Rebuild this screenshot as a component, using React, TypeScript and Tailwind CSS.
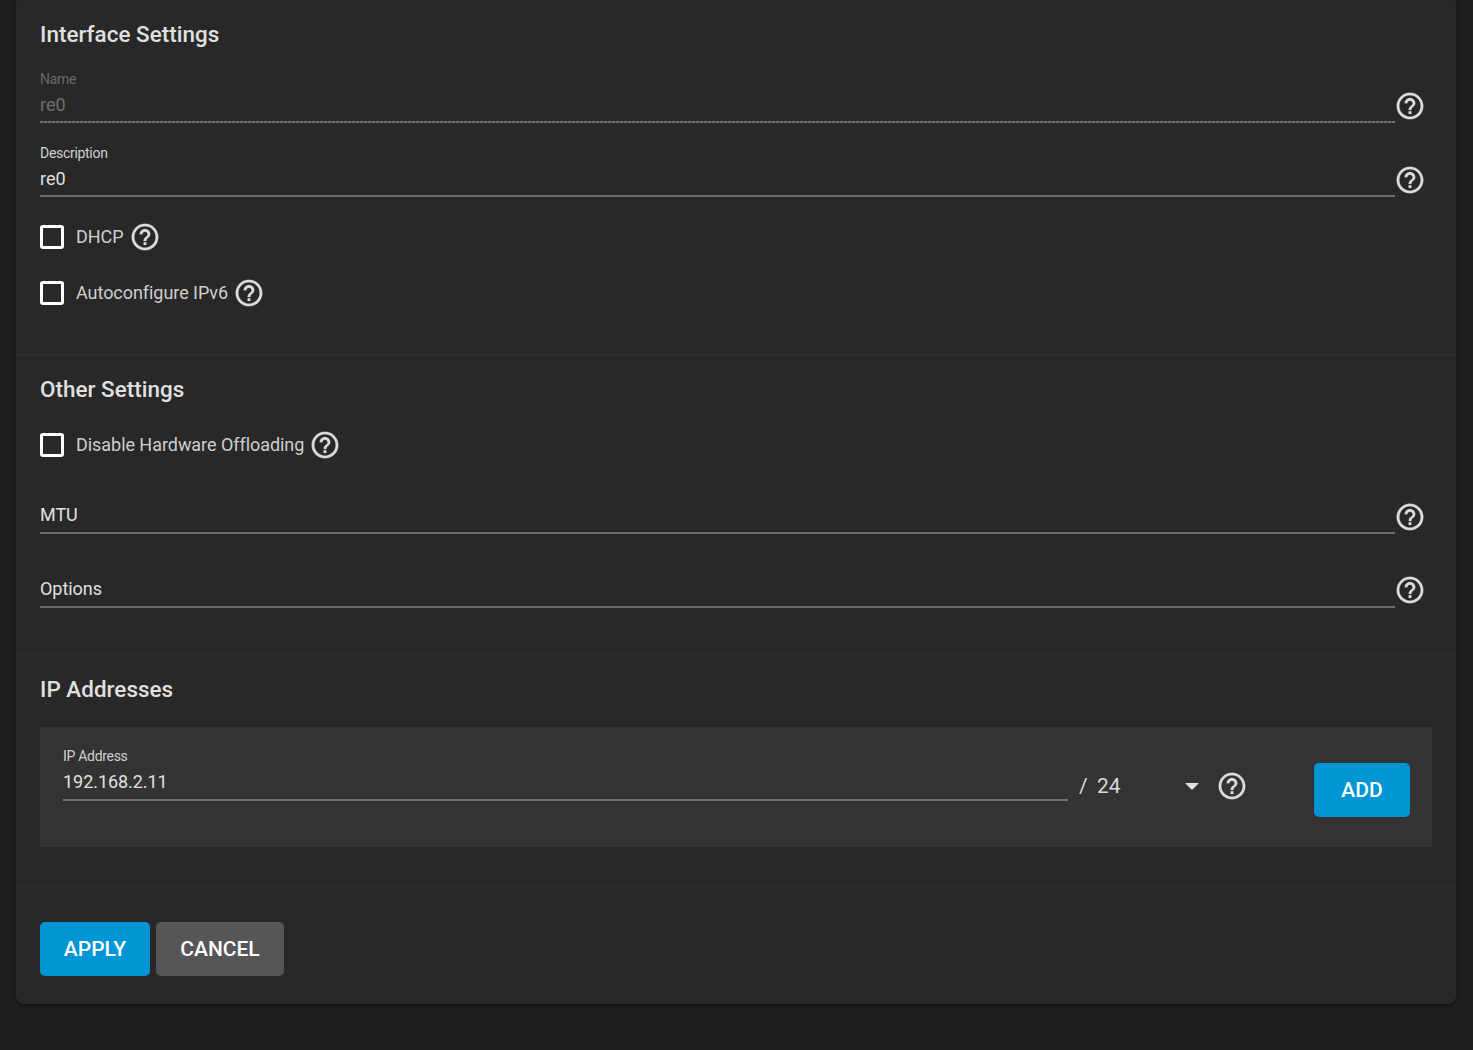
const HELP_PATH =
  "M11 18h2v-2h-2v2zm1-16C6.48 2 2 6.48 2 12s4.48 10 10 10 10-4.48 10-10S17.52 2 12 2zm0 18c-4.41 0-8-3.59-8-8s3.59-8 8-8 8 3.59 8 8-3.59 8-8 8zm0-14c-2.21 0-4 1.79-4 4h2c0-1.1.9-2 2-2s2 .9 2 2c0 2-3 1.75-3 5h2c0-2.25 3-2.5 3-5 0-2.21-1.79-4-4-4z";

function Help({ className = "" }: { className?: string }) {
  return (
    <svg
      viewBox="0 0 24 24"
      className={`w-[32px] h-[32px] shrink-0 fill-[#dcdcdc] stroke-[#dcdcdc] stroke-[0.15] ${className}`}
    >
      <path d={HELP_PATH} />
    </svg>
  );
}

function Heading({ children }: { children: string }) {
  return <h2 className="text-[22.4px] leading-[32px] font-medium text-[#e0e0e0] tracking-[0.05px]">{children}</h2>;
}

function Field({
  label,
  value,
  disabled,
  placeholder,
  helpOffset = "mt-[24px]",
}: {
  label?: string;
  value: string;
  disabled?: boolean;
  placeholder?: boolean;
  helpOffset?: string;
}) {
  return (
    <div className="flex h-[74px]">
      <div className="w-[1355px]">
        <div
          className={`h-[26px] text-[14px] leading-[26px] tracking-[-0.3px] ${disabled ? "text-[#6a6a6a]" : "text-[#d0d0d0]"}`}
        >
          {label}
        </div>
        <div
          className={`h-[29px] text-[18px] tracking-[-0.05px] ${placeholder ? "leading-[24px]" : "leading-[26px]"} ${disabled ? "text-[#6f6f6f]" : "text-[#e0e0e0]"}`}
        >
          {value}
        </div>
        <div
          className={`h-[2px] ${disabled ? "bg-[repeating-linear-gradient(90deg,#6e6e6e_0,#6e6e6e_3px,#484848_3px,#484848_4px)]" : "bg-[#6b6b6b]"}`}
        />
      </div>
      <Help className={`ml-[-1.5px] ${helpOffset}`} />
    </div>
  );
}

function Check({ label }: { label: string }) {
  return (
    <div className="flex items-center h-[32px]">
      <span className="w-[24px] h-[24px] border-[3px] border-white rounded-[3px] shrink-0" />
      <span className="ml-[12px] -mt-[2px] text-[18px] text-[#cfcfcf] tracking-[-0.05px]">{label}</span>
      <Help className="ml-[5px]" />
    </div>
  );
}

function Btn({ children, className }: { children: string; className: string }) {
  return (
    <button className={`h-[54px] pt-[2px] rounded-[5px] text-[21px] font-medium text-white ${className}`}>
      {children}
    </button>
  );
}

export default function App() {
  return (
    <div className="min-h-[1050px] bg-[#1e1e1e] pl-[16px] overflow-hidden [font-family:Roboto,sans-serif]">
      <div className="-mt-[4px] w-[1440px] h-[1008px] rounded-[8px] bg-[#282828] shadow-[0_2px_4px_rgba(0,0,0,0.4)]">
        <section className="h-[360px] px-[24px] pt-[22px] border-b-2 border-[#2f2f2f]">
          <Heading>Interface Settings</Heading>
          <div className="mt-[16px]">
            <Field label="Name" value="re0" disabled />
            <Field label="Description" value="re0" />
          </div>
          <div className="mt-[7px]">
            <Check label="DHCP" />
          </div>
          <div className="mt-[24px]">
            <Check label="Autoconfigure IPv6" />
          </div>
        </section>
        <section className="h-[299px] px-[24px] pt-[17px] border-b border-[#303030]">
          <Heading>Other Settings</Heading>
          <div className="mt-[24px]">
            <Check label="Disable Hardware Offloading" />
          </div>
          <div className="mt-[16px]">
            <Field value="MTU" placeholder />
            <Field value="Options" placeholder helpOffset="mt-[23px]" />
          </div>
        </section>
        <section className="h-[232px] px-[24px] pt-[18px] border-b border-[#303030]">
          <Heading>IP Addresses</Heading>
          <div className="mt-[22px] h-[120px] bg-[#333333] pl-[23px] flex">
            <div className="w-[1005px] pt-[16px]">
              <div className="h-[26px] text-[14px] leading-[26px] tracking-[-0.3px] text-[#d0d0d0]">IP Address</div>
              <div className="h-[32px] text-[18px] leading-[26px] tracking-[-0.05px] text-[#e0e0e0] border-b-2 border-[#6f6f6f]">
                192.168.2.11
              </div>
            </div>
            <div className="w-[246px] flex items-start pt-[43px] pl-[11px] text-[21px] leading-[32px] text-[#d8d8d8]">
              <span className="w-[18px]">/</span>
              <span className="w-[24px]">24</span>
              <span className="ml-[64px] mt-[13px] w-0 h-0 border-x-[7.5px] border-x-transparent border-t-[7px] border-t-[#e0e0e0]" />
              <Help className="ml-[17px]" />
            </div>
            <div className="pt-[36px]">
              <Btn className="w-[96px] bg-[#0095d5]">ADD</Btn>
            </div>
          </div>
        </section>
        <section className="px-[24px] pt-[35px] flex gap-[6px]">
          <Btn className="w-[110px] bg-[#0095d5]">APPLY</Btn>
          <Btn className="w-[128px] bg-[#565656] text-[#f0f0f0]">CANCEL</Btn>
        </section>
      </div>
    </div>
  );
}
